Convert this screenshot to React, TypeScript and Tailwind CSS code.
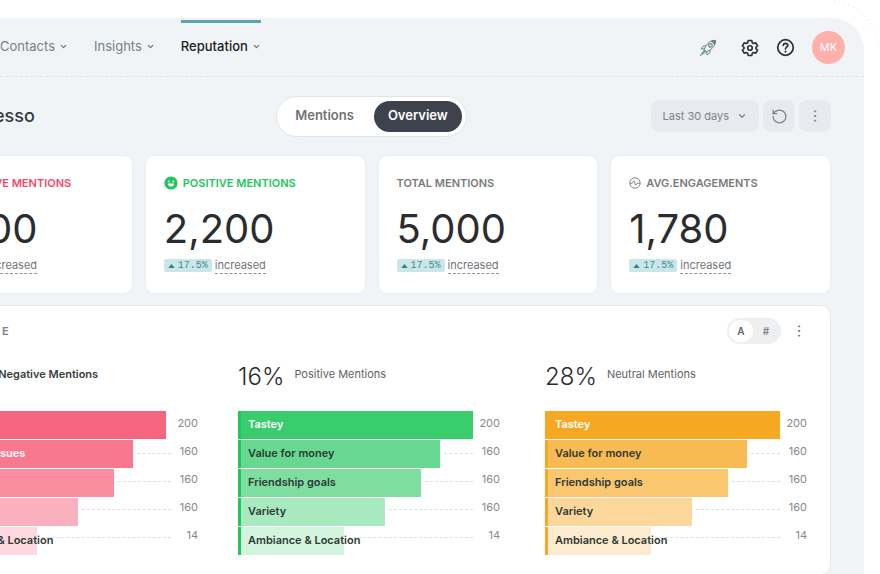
import clsx from "clsx";
import { ChevronDown, EllipsisVertical, RotateCcw } from "lucide-react";

type Bar = { label: string; value: number; width: string; color: string; light?: boolean };

type Breakdown = {
  percent: string;
  title: string;
  active?: boolean;
  edge: string;
  bars: Bar[];
};

const navItems = ["Contacts", "Insights", "Reputation"];

const stats = [
  { title: "NEGATIVE MENTIONS", value: "1,000", tone: "text-[#f4486b]", icon: "sad" },
  { title: "POSITIVE MENTIONS", value: "2,200", tone: "text-[#22c55e]", icon: "smile" },
  { title: "TOTAL MENTIONS", value: "5,000", tone: "text-[#7a7a7a]", icon: "" },
  { title: "AVG.ENGAGEMENTS", value: "1,780", tone: "text-[#7a7a7a]", icon: "pulse" },
];

const breakdowns: Breakdown[] = [
  {
    percent: "56%",
    title: "Negative Mentions",
    active: true,
    edge: "bg-[#f4486b]",
    bars: [
      { label: "Pricing", value: 200, width: "w-[235px]", color: "bg-[#f6657f]", light: true },
      { label: "Cleaning Issues", value: 160, width: "w-[202px]", color: "bg-[#f8798f]", light: true },
      { label: "Quality", value: 160, width: "w-[183px]", color: "bg-[#f98ea1]" },
      { label: "Variety", value: 160, width: "w-[147px]", color: "bg-[#fab1be]" },
      { label: "Ambiance & Location", value: 14, width: "w-[106px]", color: "bg-[#fdd8df]" },
    ],
  },
  {
    percent: "16%",
    title: "Positive Mentions",
    edge: "bg-[#22c55e]",
    bars: [
      { label: "Tastey", value: 200, width: "w-[235px]", color: "bg-[#3acd6e]", light: true },
      { label: "Value for money", value: 160, width: "w-[202px]", color: "bg-[#66d88f]" },
      { label: "Friendship goals", value: 160, width: "w-[183px]", color: "bg-[#7ddea0]" },
      { label: "Variety", value: 160, width: "w-[147px]", color: "bg-[#a8e9bf]" },
      { label: "Ambiance & Location", value: 14, width: "w-[106px]", color: "bg-[#d3f4df]" },
    ],
  },
  {
    percent: "28%",
    title: "Neutral Mentions",
    edge: "bg-[#f7a823]",
    bars: [
      { label: "Tastey", value: 200, width: "w-[235px]", color: "bg-[#f7a823]", light: true },
      { label: "Value for money", value: 160, width: "w-[202px]", color: "bg-[#f8ba52]" },
      { label: "Friendship goals", value: 160, width: "w-[183px]", color: "bg-[#fac670]" },
      { label: "Variety", value: 160, width: "w-[147px]", color: "bg-[#fbd79c]" },
      { label: "Ambiance & Location", value: 14, width: "w-[106px]", color: "bg-[#fdebd0]" },
    ],
  },
];

const RocketIcon = () => (
  <svg viewBox="0 0 18 18" className="size-[18px]" fill="none" stroke="#6b747c" strokeWidth="0.9">
    <path d="M16.4 1.4c-4-.2-7 1.600-9.300 5.300L5.200 10.100l2.500 2.500 3.500-1.800c3.700-2.500 5.400-5.400 5.200-9.400z" fill="#f4f7f8" />
    <path d="M16.400 1.400c-1.500-.1-2.700.1-4 .7l3.300 3.300c.6-1.300.8-2.500.7-4z" fill="#35b080" />
    <circle cx="11.400" cy="6.400" r="2" fill="#c3c8cc" />
    <path d="M7.100 6.700 4 7.300 2.200 10l3-.1M11.200 10.800l-.5 3.100-2.800 1.900-.2-3.200" />
    <path d="M5 11.200l-3.800 5.500 5.600-3.700z" fill="#3dc495" stroke="#6b9f93" />
  </svg>
);

const GearIcon = () => (
  <svg viewBox="0 0 24 24" className="size-[18px]" fill="none" stroke="#2f3235" strokeWidth="2.200" strokeLinejoin="round">
    <path d="M9.700 2h4.600l.8 3 1.700 1 3-.8 2.300 4-2.200 2.100v1.400l2.200 2.100-2.300 4-3-.8-1.700 1-.8 3H9.700l-.8-3-1.700-1-3 .8-2.300-4 2.200-2.100v-1.400L1.900 9.200l2.300-4 3 .8 1.700-1z" />
    <circle cx="12" cy="12" r="3" />
  </svg>
);

const HelpIcon = () => (
  <svg viewBox="0 0 24 24" className="size-[19px]" fill="none" stroke="#2f3235" strokeWidth="2.200" strokeLinecap="round">
    <circle cx="12" cy="12" r="9.800" />
    <path d="M9.200 9.300c.2-1.600 1.300-2.400 2.800-2.400 1.700 0 2.900 1 2.900 2.500 0 2-2.900 2.200-2.900 4.200" />
    <path d="M12 17v.2" strokeWidth="2.600" />
  </svg>
);

const StatIcon = ({ name }: { name: string }) => {
  if (name === "smile" || name === "sad") {
    return (
      <svg viewBox="0 0 14 14" className="size-[14px]">
        <circle cx="7" cy="7" r="6.600" fill="currentColor" />
        <circle cx="4.700" cy="5.400" r="0.900" fill="#fff" />
        <circle cx="9.300" cy="5.400" r="0.900" fill="#fff" />
        <path d={name === "smile" ? "M4 7.500h6a3 3 0 0 1-6 0z" : "M4 10.500a3 3 0 0 1 6 0z"} fill="#fff" />
      </svg>
    );
  }
  if (name === "pulse") {
    return (
      <svg viewBox="0 0 12 12" className="size-[12px]" fill="none" stroke="currentColor" strokeWidth="0.900">
        <circle cx="6" cy="6" r="5.200" />
        <path d="M.8 6.300h2.400l1.600-2.500 2 4.400 1.400-1.900h3" />
      </svg>
    );
  }
  return null;
};

const StatCard = ({ title, value, tone, icon }: (typeof stats)[number]) => (
  <article
    className={clsx(
      "flex h-[139px] flex-col rounded-[10px] border border-[#eceff2] bg-white pt-[19px]",
      icon === "sad" ? "px-[22px]" : "px-[18px]"
    )}
  >
    <h2 className={clsx("flex h-4 items-center gap-[5px] text-[11px] leading-4 font-semibold whitespace-nowrap", tone)}>
      <StatIcon name={icon} />
      {title}
    </h2>
    <p className="mt-4 text-[40px] leading-[44px] text-[#2b2c2e]">{value}</p>
    <p className="mt-[6px] flex items-center gap-[3px] text-[11px] leading-4 text-[#707477]">
      <span className="flex h-[13px] items-center gap-[3px] rounded-[2px] bg-[#c9e6e9] px-1 font-['Liberation_Mono',monospace] text-[10px] text-[#3d8d90]">
        <svg viewBox="0 0 8 5" className="h-1 w-[7px]">
          <path d="M0 5 4 0l4 5z" fill="#2f8583" />
        </svg>
        17.5%
      </span>
      <span className="border-b border-dashed border-[#8e9194]">increased</span>
    </p>
  </article>
);

const BreakdownChart = ({ percent, title, active, edge, bars }: Breakdown) => (
  <section>
    <h3 className={clsx("flex h-9 items-start whitespace-nowrap", active ? "gap-4" : "gap-[10px]")}>
      <span className="text-[24px] leading-9 font-light text-[#2b2c2e]">{percent}</span>
      <span className={clsx("text-[11px] leading-[30px]", active ? "font-semibold text-[#3a3d40]" : "text-[#5f6366]")}>
        {title}
      </span>
    </h3>
    <div className="mt-4 grid">
      <ul className="[grid-area:1/1] text-[11px] text-[#85898c]">
        {bars.map((bar) => (
          <li key={bar.label} className="flex h-7 leading-[25px]">
            <div className={clsx("flex items-center", active ? "w-[240px]" : "w-[235px]")}>
              <span className={clsx("shrink-0", bar.width)} />
              {bar.value < 200 && <span className="ml-1 flex-1 border-t border-dashed border-[#dcdfe1]" />}
            </div>
            <span className="w-[27px] text-right">{bar.value}</span>
          </li>
        ))}
      </ul>
      <ul className="flex flex-col gap-px [grid-area:1/1]">
        {bars.map((bar) => (
          <li key={bar.label} className={clsx("flex h-7 items-center", bar.width, bar.color)}>
            <span className={clsx("h-full w-[3px] shrink-0", edge)} />
            <span
              className={clsx(
                "pb-[2px] pl-[7px] text-[11px] leading-4 font-semibold whitespace-nowrap",
                bar.light ? "text-white" : "text-[#2f3a35]"
              )}
            >
              {bar.label}
            </span>
          </li>
        ))}
      </ul>
    </div>
  </section>
);

export default function App() {
  return (
    <div className="relative h-screen overflow-hidden bg-white pt-[18px] pr-4 font-[Inter,sans-serif]">
      {/* dotted ring behind the corner */}
      <svg viewBox="0 0 50 50" className="absolute top-0 right-0 size-[50px]" fill="none" stroke="#dfe2e4">
        <path d="M4 0C26 5 46 20 49 46" strokeDasharray="1 4" />
      </svg>
      <div className="h-full overflow-hidden rounded-tr-[32px] bg-[#f0f4f7]">
        <header className="flex h-[59px] items-start justify-between border-b border-dashed border-[#e0e5e9] pr-[19px]">
          <nav className="flex gap-[26px] pt-[2px]">
            {navItems.map((item) => (
              <a
                key={item}
                href="#"
                className={clsx(
                  "flex items-center gap-1 border-t-[3px] pt-[11px] text-[13px] leading-6",
                  item === "Reputation"
                    ? "border-[#58a5ac] font-medium text-[#1f2123]"
                    : "border-transparent text-[#7b7f83]"
                )}
              >
                {item}
                <ChevronDown className="size-[9px] text-[#6b6f73]" strokeWidth={3} />
              </a>
            ))}
          </nav>
          <div className="flex items-center gap-[17px] pt-[13px]">
            <button aria-label="What's new" className="mr-[7px]">
              <RocketIcon />
            </button>
            <button aria-label="Settings">
              <GearIcon />
            </button>
            <button aria-label="Help">
              <HelpIcon />
            </button>
            <button className="size-[33px] rounded-full bg-[#ffb0aa] text-[11px] text-white">MK</button>
          </div>
        </header>

        <main className="-ml-[88px] pr-[33px]">
          <div className="grid h-[78px] grid-cols-[1fr_auto_1fr] items-center">
            <h1 className="pl-[82px] text-lg font-medium text-[#36393c]">esso</h1>
            <div className="flex h-[41px] items-center rounded-full border border-[#e3e6e8] bg-white p-1 text-[13px] font-semibold">
              <button className="pr-5 pl-[14px] text-[#707376]">Mentions</button>
              <button className="h-[31px] rounded-full bg-[#3e424c] px-[14px] text-white">Overview</button>
            </div>
            <div className="flex justify-end gap-1 text-[#808388]">
              <button className="flex h-8 items-center gap-2 rounded-lg bg-[#e7eaee] px-3 text-[11px]">
                Last 30 days
                <ChevronDown className="size-[10px]" strokeWidth={3} />
              </button>
              <button aria-label="Refresh" className="flex size-8 items-center justify-center rounded-lg bg-[#e7eaee]">
                <RotateCcw className="size-[17px]" strokeWidth={1.8} />
              </button>
              <button aria-label="More" className="flex size-8 items-center justify-center rounded-lg bg-[#e7eaee]">
                <EllipsisVertical className="size-4" strokeWidth={1.5} />
              </button>
            </div>
          </div>

          <div className="grid grid-cols-4 gap-3">
            {stats.map((stat) => (
              <StatCard key={stat.title} {...stat} />
            ))}
          </div>

          <section className="mt-[11px] h-[270px] rounded-[10px] border border-[#e6e9ec] bg-white pl-[18px]">
            <div className="mb-[3px] flex h-[50px] items-center justify-between pr-[23px]">
              <h2 className="pl-[71px] text-[11px] font-semibold text-[#808386]">E</h2>
              <div className="flex items-center gap-[10px]">
                <div className="flex h-[26px] items-center rounded-full bg-[#eeeff1] p-[2px] text-[10px] font-semibold">
                  <button className="h-[22px] w-6 rounded-full bg-white text-[#5f6265]">A</button>
                  <button className="h-[22px] w-[26px] text-[#808386]">#</button>
                </div>
                <button aria-label="Chart options" className="text-[#707376]">
                  <EllipsisVertical className="size-4" strokeWidth={1.5} />
                </button>
              </div>
            </div>
            <div className="grid grid-cols-[307px_307px_auto]">
              {breakdowns.map((item) => (
                <BreakdownChart key={item.title} {...item} />
              ))}
            </div>
          </section>
        </main>
      </div>
    </div>
  );
}
